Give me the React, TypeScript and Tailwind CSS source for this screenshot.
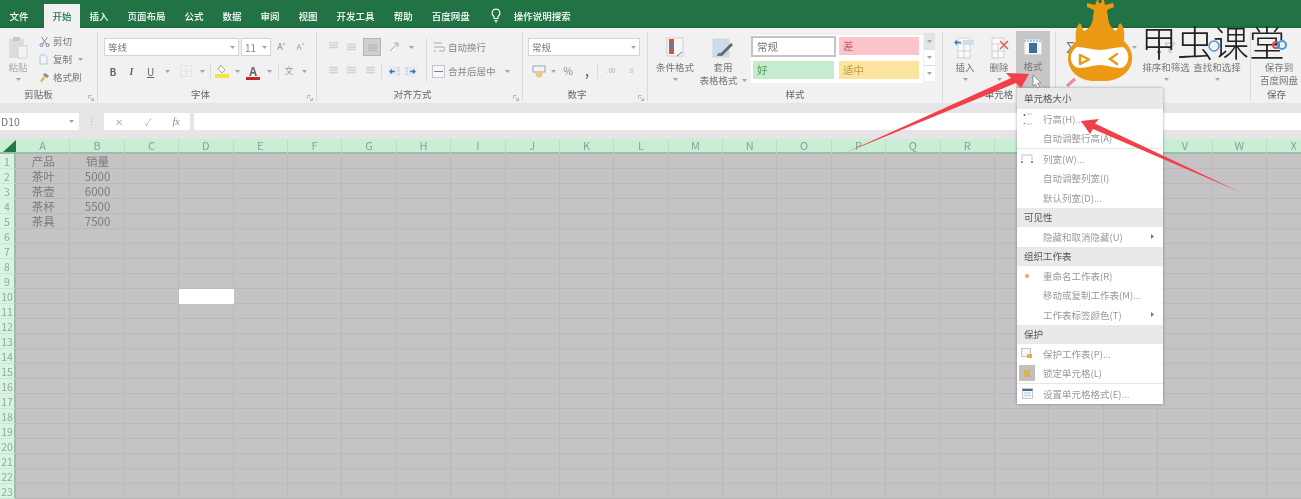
import React from "react";

const Ch = ({ className = "" }: { className?: string }) => (
  <svg width="5" height="3" viewBox="0 0 5 3" className={className}>
    <path d="M0 0h5L2.5 3z" fill="#a5a5a5" />
  </svg>
);

const C = ({ className = "", children }: { className?: string; children?: React.ReactNode }) => (
  <div className={"flex items-center justify-center shrink-0 " + className}>{children}</div>
);

const Group = ({ label, className, labelClass = "", launcher, children }: { label: string; className: string; labelClass?: string; launcher?: boolean; children: React.ReactNode }) => (
  <div className={"relative flex flex-col shrink-0 mt-[4px] h-[69px] border-r border-[#d9d9d9] " + className}>
    <div className="h-[58px]">{children}</div>
    <div className={"h-[13px] leading-[13px] text-center text-[9.5px] text-[#666] " + labelClass}>{label}</div>
    {launcher && (
      <svg width="6" height="6" viewBox="0 0 6 6" className="absolute right-[3px] bottom-0">
        <path d="M.5.5h3M.5.5v3M2 2l3.500 3.500M5.500 3v2.500H3" stroke="#aaa" strokeWidth=".8" fill="none" />
      </svg>
    )}
  </div>
);

const T = ({ className = "", children }: { className?: string; children: React.ReactNode }) => (
  <span className={"text-[9.5px] leading-[12px] text-[#777] whitespace-nowrap " + className}>{children}</span>
);

const AlignIcon = ({ c = "#d2d2d2", y = 0 }: { c?: string; y?: number }) => (
  <svg width="11" height="10" viewBox="0 0 11 10">
    <path d={`M1 ${1.5 + y}h9M1 ${4 + y}h9M1 ${6.5 + y}h9`} stroke={c} strokeWidth="1.500" />
  </svg>
);

const Tab = ({ children, className = "" }: { children: React.ReactNode; className?: string }) => (
  <div className={"px-[9.5px] text-[9.5px] leading-[24px] text-white font-medium whitespace-nowrap " + className}>{children}</div>
);

const TitleBar = () => (
  <div className="flex h-[28px] pt-[4px] bg-[#217346] border-b-2 border-[#1a6b3c] shrink-0">
    <Tab className="mr-[6px]">文件</Tab>
    <div className="w-[36px] h-[24px] bg-[#f1f1f1] text-center text-[9.5px] leading-[24px] text-[#217346] font-medium">开始</div>
    <Tab>插入</Tab>
    <Tab>页面布局</Tab>
    <Tab>公式</Tab>
    <Tab>数据</Tab>
    <Tab>审阅</Tab>
    <Tab>视图</Tab>
    <Tab>开发工具</Tab>
    <Tab>帮助</Tab>
    <Tab>百度网盘</Tab>
    <svg width="10" height="15" viewBox="0 0 10 15" className="ml-[12px] mt-[4px]">
      <path d="M5 1a4 4 0 0 0-2.500 7c.6.6.7 1.500.7 2.500h3.600c0-1 .1-1.900.7-2.500A4 4 0 0 0 5 1z" fill="none" stroke="#fff" strokeWidth="1.200" />
      <path d="M3.500 12.500h3M4 14h2" stroke="#fff" />
    </svg>
    <Tab className="ml-[3px]">操作说明搜索</Tab>
  </div>
);

const Clipboard = () => (
  <Group label="剪贴板" className="w-[98px]" labelClass="pr-[20px]" launcher>
    <div className="flex">
      <div className="w-[36px] flex flex-col items-center pt-[4px]">
        <svg width="22" height="23" viewBox="0 0 22 23">
          <rect x="2" y="3" width="15" height="19" fill="#dcdcdc" />
          <rect x="6" y="1" width="7" height="4" fill="#c6c6c6" />
          <rect x="11" y="10" width="9" height="12" fill="#f4f4f4" stroke="#d2d2d2" />
        </svg>
        <T className="mt-[2px] text-[#aaa]">粘贴</T>
        <Ch className="mt-[5px]" />
      </div>
      <div className="flex flex-col gap-[6px] pt-[3px] pl-[3px]">
        <div className="flex items-center h-[12px]">
          <svg width="11" height="11" viewBox="0 0 11 11" className="mr-[3px]">
            <path d="M2.500 1l5 7M8.500 1l-5 7" stroke="#888" fill="none" />
            <circle cx="2.500" cy="9" r="1.500" fill="none" stroke="#6f89b0" />
            <circle cx="8.500" cy="9" r="1.500" fill="none" stroke="#6f89b0" />
          </svg>
          <T>剪切</T>
        </div>
        <div className="flex items-center h-[12px]">
          <svg width="11" height="11" viewBox="0 0 11 11" className="mr-[3px]">
            <path d="M1 1h5l2 2v7H1z" fill="#eef3f8" stroke="#b8c6d6" />
          </svg>
          <T>复制</T>
          <Ch className="ml-[6px]" />
        </div>
        <div className="flex items-center h-[12px]">
          <svg width="11" height="11" viewBox="0 0 11 11" className="mr-[3px]">
            <path d="M6 1l4 3-2 2-4-3z" fill="#888" />
            <path d="M5 4L1 9l2 1 3-4z" fill="#e8b23a" />
          </svg>
          <T>格式刷</T>
        </div>
      </div>
    </div>
  </Group>
);

const Select = ({ className, value }: { className: string; value: string }) => (
  <div className={"flex items-center justify-between h-[18px] bg-white border border-[#d4d4d4] px-[3px] " + className}>
    <T className="text-[#8a8a8a]">{value}</T>
    <Ch />
  </div>
);

const Sep = ({ className = "" }: { className?: string }) => <div className={"w-px h-[16px] bg-[#dcdcdc] shrink-0 " + className} />;

const FontGroup = () => (
  <Group label="字体" className="w-[219px]" labelClass="pr-[13px]" launcher>
    <div className="flex flex-col gap-[6px] pt-[6px] pl-[6px]">
      <div className="flex h-[18px] items-center">
        <Select className="w-[135px]" value="等线" />
        <div className="flex items-center justify-between w-[30px] h-[18px] ml-[2px] bg-white border border-[#d4d4d4] px-[3px]">
          <span className="text-[10px] text-[#888]">11</span>
          <Ch />
        </div>
        <C className="w-[19px] ml-[1px] text-[9px] text-[#888]">A<sup className="text-[5px]">^</sup></C>
        <C className="w-[19px] text-[8px] text-[#999]">A<sup className="text-[5px]">ˇ</sup></C>
      </div>
      <div className="flex h-[18px] items-center">
        <C className="w-[18px] text-[10px] font-bold text-[#666]">B</C>
        <C className="w-[19px] text-[10px] italic font-bold text-[#666] font-['Liberation_Serif',serif]">I</C>
        <C className="w-[19px] text-[10px] underline text-[#666]">U</C>
        <C className="w-[14px]"><Ch /></C>
        <C className="w-[24px]">
          <svg width="12" height="12" viewBox="0 0 12 12">
            <path d="M.5.500h11v11H.5zM6 .5v11M.5 6h11" stroke="#dcdcdc" fill="none" strokeDasharray="1 .5" />
          </svg>
        </C>
        <C className="w-[8px]"><Ch /></C>
        <Sep className="ml-[4px] mr-[4px]" />
        <C className="w-[14px]">
          <svg width="14" height="14" viewBox="0 0 14 14">
            <path d="M6 1l4 5-3 3-4-4z" fill="#f4f4f4" stroke="#aaa" />
            <rect x="0" y="10" width="14" height="4" fill="#f1e83f" />
          </svg>
        </C>
        <C className="w-[17px]"><Ch /></C>
        <C className="w-[14px] relative">
          <span className="text-[12px] leading-[12px] font-bold text-[#666]">A</span>
          <span className="absolute left-0 right-0 bottom-[-3px] h-[3px] bg-[#c9242b]" />
        </C>
        <C className="w-[18px]"><Ch /></C>
        <Sep />
        <C className="w-[20px] text-[9px] text-[#999]">文</C>
        <C className="w-[10px]"><Ch /></C>
      </div>
    </div>
  </Group>
);

const AlignGroup = () => (
  <Group label="对齐方式" className="w-[206px]" labelClass="pr-[14px]" launcher>
    <div className="flex pt-[6px]">
      <div className="flex flex-col gap-[6px] pl-[7px]">
        <div className="flex h-[18px] items-center">
          <C className="w-[18px]"><AlignIcon y={-1} /></C>
          <C className="w-[18px]"><AlignIcon y={1} /></C>
          <C className="w-[18px] h-[18px] ml-[3px] bg-[#cfcfcf] border border-[#b5b5b5]"><AlignIcon c="#bbb" y={2} /></C>
          <C className="w-[22px] ml-[2px] text-[9px] text-[#999]">
            <svg width="12" height="12" viewBox="0 0 12 12"><path d="M2 10L9 3M6 2h4v4" stroke="#a5a5a5" fill="none" /></svg>
          </C>
          <C className="w-[12px]"><Ch /></C>
        </div>
        <div className="flex h-[18px] items-center">
          <C className="w-[18px]"><AlignIcon /></C>
          <C className="w-[18px]"><AlignIcon /></C>
          <C className="w-[21px]"><AlignIcon /></C>
          <Sep />
          <C className="w-[22px] ml-[1px]">
            <svg width="12" height="11" viewBox="0 0 12 11"><rect width="12" height="11" fill="#e6ecf2" /><path d="M9 2h3M9 5h3M9 8h3" stroke="#ccc" /><path d="M7 5.500H2M4 3.500l-2 2 2 2" stroke="#3e78b8" fill="none" strokeWidth="1.300" /></svg>
          </C>
          <C className="w-[12px]">
            <svg width="12" height="11" viewBox="0 0 12 11"><rect width="12" height="11" fill="#e6ecf2" /><path d="M0 2h3M0 5h3M0 8h3" stroke="#ccc" /><path d="M5 5.500h5M8 3.500l2 2-2 2" stroke="#3e78b8" fill="none" strokeWidth="1.300" /></svg>
          </C>
        </div>
      </div>
      <Sep className="ml-[9px] !h-[44px]" />
      <div className="flex flex-col gap-[6px] pl-[5px]">
        <div className="flex h-[18px] items-center">
          <svg width="13" height="12" viewBox="0 0 13 12" className="mr-[3px]">
            <path d="M2 2h8M2 6h9a2 2 0 0 1 0 4H7M2 10h2" stroke="#a8a8a8" fill="none" />
          </svg>
          <T className="text-[#888]">自动换行</T>
        </div>
        <div className="flex h-[18px] items-center">
          <svg width="13" height="13" viewBox="0 0 13 13" className="mr-[3px]">
            <rect x=".5" y=".5" width="12" height="12" fill="#f7f7f7" stroke="#c6c6c6" />
            <path d="M2 6.500h9" stroke="#5b87b8" />
          </svg>
          <T className="text-[#888]">合并后居中</T>
          <Ch className="ml-[9px]" />
        </div>
      </div>
    </div>
  </Group>
);

const NumberGroup = () => (
  <Group label="数字" className="w-[125px]" labelClass="pr-[16px]" launcher>
    <div className="flex flex-col gap-[6px] pt-[6px] pl-[5px]">
      <div className="flex h-[18px] items-center">
        <Select className="w-[112px]" value="常规" />
      </div>
      <div className="flex h-[18px] items-center">
        <C className="w-[22px]">
          <svg width="14" height="13" viewBox="0 0 14 13">
            <rect x="1" y="1" width="12" height="6" fill="#f4f4f4" stroke="#8ba6c4" />
            <circle cx="7" cy="9" r="3.500" fill="#efc58e" />
          </svg>
        </C>
        <C className="w-[7px]"><Ch /></C>
        <C className="w-[18px] ml-[2px] text-[10.5px] text-[#888]">%</C>
        <C className="w-[20px] text-[11px] font-bold text-[#666]">,</C>
        <Sep className="mr-[3px]" />
        <C className="w-[20px] text-[6px] leading-[6px] text-[#aaa]">.00</C>
        <C className="w-[20px] text-[6px] leading-[6px] text-[#aaa]">.0</C>
      </div>
    </div>
  </Group>
);

const Big = ({ className = "", icon, lines, chev = true }: { className?: string; icon: React.ReactNode; lines: React.ReactNode[]; chev?: boolean }) => (
  <div className={"flex flex-col items-center shrink-0 pt-[3px] " + className}>
    <div className="h-[25px] flex items-center">{icon}</div>
    {lines.map((l, i) => (
      <T key={i} className="mt-[1px] text-[#777]">{l}</T>
    ))}
    {chev && <Ch className="mt-[5px]" />}
  </div>
);

const Style = ({ className, children }: { className: string; children: string }) => (
  <div className={"flex items-center pl-[4px] text-[10.5px] " + className}>{children}</div>
);

const StylesGroup = () => (
  <Group label="样式" className="w-[295px]">
    <div className="flex">
      <Big
        className="w-[50px] ml-[2px]"
        lines={["条件格式"]}
        icon={
          <svg width="20" height="22" viewBox="0 0 20 22">
            <rect x="2" y="1" width="16" height="18" fill="#f6f6f6" stroke="#d0d0d0" />
            <rect x="4" y="2" width="5" height="5" fill="#c65b3b" />
            <rect x="4" y="7" width="5" height="5" fill="#5d7fae" />
            <rect x="4" y="12" width="5" height="5" fill="#c65b3b" />
            <path d="M12 19l5-4" stroke="#777" />
          </svg>
        }
      />
      <Big
        className="w-[46px]"
        lines={[
          "套用",
          <span className="inline-flex items-center" key="b">表格格式<Ch className="ml-[4px]" /></span>,
        ]}
        chev={false}
        icon={
          <svg width="24" height="22" viewBox="0 0 24 22">
            <path d="M2 2h16v18H2z" fill="#cfdbe9" stroke="#d6d6d6" />
            <path d="M8 18l12-12 2 2-11 11z" fill="#666" />
            <path d="M6 19c0-3 3-4 5-3l-1 3z" fill="#4a7fb5" />
          </svg>
        }
      />
      <div className="grid grid-cols-[85px_85px] grid-rows-[24px_24px] w-[172px] h-[48px] mt-[3px] ml-[5px] bg-white content-start">
        <Style className="border-2 border-[#c4c4c4] bg-white text-[#777] h-[21px] mt-[1px]">常规</Style>
        <Style className="bg-[#fcc5cc] text-[#c5636e] ml-[3px] h-[18px] mt-[2px] w-[80px]">差</Style>
        <Style className="bg-[#c7ebcf] text-[#4d9a5e] ml-[2px] h-[18px] mt-[2px] w-[81px]">好</Style>
        <Style className="bg-[#fde49e] text-[#c39a45] ml-[3px] h-[18px] mt-[2px] w-[80px]">适中</Style>
      </div>
      <div className="flex flex-col w-[11px] mt-[1px] ml-[1px]">
        <C className="h-[17px] bg-[#e4e4e4]"><Ch /></C>
        <C className="h-[15px] bg-white"><Ch /></C>
        <C className="h-[16px] bg-white border-t border-[#ddd]"><Ch /></C>
      </div>
    </div>
  </Group>
);

const TableIcon = ({ del }: { del?: boolean }) => (
  <svg width="26" height="22" viewBox="0 0 26 22">
    <path d="M6 1h12v20H6zM6 7h12M6 14h12M12 7v14" stroke="#d0d0d0" fill="#fafafa" />
    {del ? (
      <path d="M14 4l8 8M22 4l-8 8" stroke="#d9604c" strokeWidth="1.500" />
    ) : (
      <>
        <rect x="11" y="3" width="11" height="5" fill="#cfdcea" />
        <path d="M9 5.500H3M5 3.500l-2 2 2 2" stroke="#3e78b8" fill="none" strokeWidth="1.300" />
      </>
    )}
  </svg>
);

const CellsGroup = () => (
  <Group label="单元格" className="w-[113px]">
    <div className="flex pl-[5px]">
      <Big className="w-[34px]" lines={["插入"]} icon={<TableIcon />} />
      <Big className="w-[34px]" lines={["删除"]} icon={<TableIcon del />} />
      <div className="w-[34px] h-[57px] bg-[#c6c6c6] -mt-[1px]">
        <Big
          lines={["格式"]}
          icon={
            <svg width="20" height="20" viewBox="0 0 20 20">
              <rect x="1" y="2" width="18" height="16" fill="#f6f6f6" stroke="#b8c4d2" />
              <rect x="6" y="6" width="8" height="10" fill="#3f6f9f" />
              <path d="M1 4h18" stroke="#6f8fb0" strokeDasharray="2 1" />
            </svg>
          }
        />
      </div>
    </div>
  </Group>
);

const EditGroup = () => (
  <Group label="" className="w-[195px]">
    <div className="flex">
      <div className="w-[84px] flex flex-col pl-[10px] pt-[6px]">
        <div className="flex items-center h-[18px]">
          <span className="text-[15px] leading-[18px] text-[#777]">Σ</span>
          <Ch className="ml-[57px]" />
        </div>
        <svg width="16" height="10" viewBox="0 0 16 10" className="mt-[21px]">
          <path d="M1 9l8-7" stroke="#e58aa6" strokeWidth="3" />
        </svg>
      </div>
      <Big
        className="w-[52px]"
        lines={["排序和筛选"]}
        icon={
          <svg width="22" height="16" viewBox="0 0 22 16">
            <path d="M4 1v13M2 11l2 3 2-3" stroke="#7b6a9c" fill="none" />
            <path d="M10 3h10l-4 5v5l-2-1V8z" stroke="#bdbdbd" fill="none" />
          </svg>
        }
      />
      <Big className="w-[50px]" lines={["查找和选择"]} icon={<span />} />
    </div>
  </Group>
);

const SaveGroup = () => (
  <Group label="保存" className="w-[51px] border-r-0">
    <Big lines={["保存到", "百度网盘"]} chev={false} icon={<span />} className="pl-[5px]" />
  </Group>
);

const Ribbon = () => (
  <div className="flex h-[75px] bg-[#f1f1f1] shrink-0">
    <Clipboard />
    <FontGroup />
    <AlignGroup />
    <NumberGroup />
    <StylesGroup />
    <CellsGroup />
    <EditGroup />
    <SaveGroup />
  </div>
);

const FormulaBar = () => (
  <div className="flex h-[36px] py-[10px] pb-[9px] bg-[#e6e4e6] shrink-0">
    <div className="flex items-center justify-between w-[79px] h-[17px] bg-white pl-[1px] pr-[5px]">
      <span className="text-[10.5px] text-[#777]">D10</span>
      <Ch />
    </div>
    <C className="w-[25px] h-[17px] text-[9px] text-[#aaa]">⋮</C>
    <div className="flex items-center w-[86px] h-[17px] bg-white">
      <C className="w-[30px] text-[10px] text-[#b5b5b5]">✕</C>
      <C className="w-[28px] text-[10px] text-[#b5b5b5]">✓</C>
      <C className="w-[28px] text-[10px] italic text-[#888] font-['Liberation_Serif',serif]">fx</C>
    </div>
    <div className="flex-1 h-[17px] ml-[4px] bg-white" />
  </div>
);

const COLS = "ABCDEFGHIJKLMNOPQRSTUVWX".split("");
const ROWS = Array.from({ length: 23 }, (_, i) => i + 1);
const DATA: Record<string, string> = {
  A1: "产品", B1: "销量",
  A2: "茶叶", B2: "5000",
  A3: "茶壶", B3: "6000",
  A4: "茶杯", B4: "5500",
  A5: "茶具", B5: "7500",
};

const Sheet = () => (
  <div className="grid grid-cols-[16px_repeat(24,54.4px)] grid-rows-[15px_repeat(23,15px)]">
    <div className="relative bg-[#c9eed6] border-b-2 border-[#9bbfa6]">
      <svg width="13" height="12" viewBox="0 0 13 12" className="absolute right-0 bottom-0">
        <path d="M13 0v12H0z" fill="#1f7a46" />
      </svg>
    </div>
    {COLS.map((c) => (
      <div key={c} className="flex items-center justify-center bg-[#c9eed6] border-b-2 border-r border-[#bbe0c9] border-b-[#9bbfa6] text-[11px] leading-none text-[#8ca094]">
        {c}
      </div>
    ))}
    {ROWS.map((r) => (
      <React.Fragment key={r}>
        <div className="flex items-center justify-center pt-[2px] bg-[#d7f3e1] border-r-2 border-b border-[#c9e8d4] border-r-[#9bbfa6] text-[10.5px] leading-none text-[#93a79b]">
          {r}
        </div>
        {COLS.map((c) => {
          const k = c + r;
          const active = k === "D10";
          return (
            <div
              key={k}
              className={
                "flex items-center justify-center pt-[2px] pl-[1px] text-[11.5px] leading-none text-[#7c7a7d] " +
                (active ? "bg-white" : "bg-[#c6c3c7] border-r border-b border-[#bcb9bd]")
              }
            >
              {DATA[k]}
            </div>
          );
        })}
      </React.Fragment>
    ))}
  </div>
);

const MenuHead = ({ children, className = "h-[19.500px]" }: { children: string; className?: string }) => (
  <div className={"flex items-center pl-[7px] bg-[#e9e9e9] text-[9.5px] text-[#555] " + className}>{children}</div>
);

const MenuItem = ({ children, icon, arrow, line, hi }: { children: string; icon?: React.ReactNode; arrow?: boolean; line?: boolean; hi?: boolean }) => (
  <div className={"relative flex items-center bg-white " + (line ? "h-[20.500px] border-b border-[#e6e6e6]" : "h-[19.500px]")}>
    <C className={"w-[16px] h-[16px] ml-[2px] mr-[8px] " + (hi ? "bg-[#c4bfbb]" : "")}>{icon}</C>
    <span className="text-[9.5px] text-[#999] whitespace-nowrap">{children}</span>
    {arrow && (
      <svg width="3" height="5" viewBox="0 0 3 5" className="absolute right-[9px] top-[7px]">
        <path d="M0 0l3 2.500L0 5z" fill="#777" />
      </svg>
    )}
  </div>
);

const Menu = () => (
  <div className="absolute left-[1017px] top-[88px] w-[146px] flex flex-col bg-white shadow-[0_0_3px_rgba(0,0,0,0.35)]">
    <MenuHead className="h-[21px]">单元格大小</MenuHead>
    <MenuItem
      icon={
        <svg width="9" height="12" viewBox="0 0 9 12">
          <path d="M4 1h5M4 11h5" stroke="#c2c2c2" />
          <path d="M1.500 1v10" stroke="#5d6f88" strokeWidth="1.600" strokeDasharray="2 7" />
        </svg>
      }
    >
      行高(H)...
    </MenuItem>
    <MenuItem line>自动调整行高(A)</MenuItem>
    <MenuItem
      icon={
        <svg width="12" height="9" viewBox="0 0 12 9">
          <path d="M1 6V1h10v5" stroke="#c2c2c2" fill="none" />
          <path d="M0 8h12" stroke="#5d6f88" strokeWidth="1.400" strokeDasharray="2 8" />
        </svg>
      }
    >
      列宽(W)...
    </MenuItem>
    <MenuItem>自动调整列宽(I)</MenuItem>
    <MenuItem>默认列宽(D)...</MenuItem>
    <MenuHead>可见性</MenuHead>
    <MenuItem arrow>隐藏和取消隐藏(U)</MenuItem>
    <MenuHead>组织工作表</MenuHead>
    <MenuItem icon={<span className="w-[4px] h-[4px] rounded-full bg-[#e3b23c]" />}>重命名工作表(R)</MenuItem>
    <MenuItem>移动或复制工作表(M)...</MenuItem>
    <MenuItem arrow>工作表标签颜色(T)</MenuItem>
    <MenuHead>保护</MenuHead>
    <MenuItem
      icon={
        <svg width="12" height="11" viewBox="0 0 12 11">
          <rect x=".5" y=".5" width="9" height="8" fill="#f5f5f5" stroke="#b8c4d2" />
          <rect x="6" y="6" width="5" height="4" fill="#e3b23c" />
        </svg>
      }
    >
      保护工作表(P)...
    </MenuItem>
    <MenuItem hi line icon={<span className="w-[6px] h-[7px] bg-[#d9b158]" />}>锁定单元格(L)</MenuItem>
    <MenuItem
      icon={
        <svg width="11" height="11" viewBox="0 0 11 11">
          <rect x=".5" y=".5" width="10" height="10" fill="#f7f7f7" stroke="#c2c8d0" />
          <path d="M.5 2h10" stroke="#3f6f9f" strokeWidth="2" />
          <path d="M2 5h7M2 7.500h7" stroke="#c7c7c7" />
        </svg>
      }
    >
      设置单元格格式(E)...
    </MenuItem>
  </div>
);

const Logo = () => (
  <>
    <svg width="90" height="90" viewBox="0 0 90 90" className="absolute left-[1060px] top-0">
      <path
        fill="#ec9a13"
        d="M27 3 L35 5 L37 0 L44 0 L45 5 L53 3 L54 7 L47 10 L48 18 C49 25 52 29 56 31 C58 29 58 25 60 23 C64 26 65 34 64 41 C69 46 73 52 72 60 C71 71 61 80 46 81 L32 81 C18 80 9 71 8 60 C8 52 11 46 16 41 C15 34 16 26 20 23 C22 25 22 29 24 31 C29 29 32 25 33 18 L34 10 L27 7 Z"
      />
      <circle cx="40" cy="1.500" r="1.800" fill="#217346" />
      <path
        fill="#fff"
        d="M17 47 C25 47 32 50 40 50 C48 50 55 47 63 47 C68 50 69 56 68 60 C67 65 63 68 60 68 C53 68 47 65 40 65 C33 65 27 68 20 68 C16 68 12 65 11 60 C10 56 12 50 17 47 Z"
      />
      <path d="M20 55 L29 59.500 L20 64 Z" fill="none" stroke="#ec9a13" strokeWidth="2.500" strokeLinejoin="round" />
      <path d="M57 54 L50 59 L57 64" fill="none" stroke="#ec9a13" strokeWidth="2.500" strokeLinecap="round" />
    </svg>
    <div className="absolute left-[1141px] top-[22px] text-[36px] leading-[38px] font-light text-[#222] whitespace-nowrap">甲虫课堂</div>
    <svg width="30" height="20" viewBox="0 0 30 20" className="absolute left-[1205px] top-[38px]">
      <circle cx="9" cy="8" r="5" fill="none" stroke="#5b93d6" strokeWidth="1.500" />
    </svg>
    <svg width="20" height="18" viewBox="0 0 20 18" className="absolute left-[1270px] top-[36px]">
      <circle cx="6" cy="9" r="3" fill="none" stroke="#d8475a" strokeWidth="2" />
      <circle cx="12" cy="9" r="4" fill="none" stroke="#3f9bd9" strokeWidth="2" />
    </svg>
  </>
);

const Overlay = () => (
  <svg width="1301" height="499" viewBox="0 0 1301 499" className="absolute left-0 top-0 pointer-events-none">
    <polygon points="845,153 1011,78 1006,73 1029,74 1021,88 1016,83" fill="#f2404a" />
    <polygon points="1240,192 1095,123.500 1099,119 1081,121 1090,134 1093,129" fill="#f2404a" />
    <path d="M1033 75 v11 l2.500-2 2 4 2-1 -2-4 h3.500 z" fill="#fff" stroke="#777" strokeWidth=".7" />
  </svg>
);

export default function App() {
  return (
    <div className="relative w-[1301px] h-[499px] overflow-hidden flex flex-col bg-[#c6c3c7] font-['Noto_Sans_CJK_SC','Noto_Sans',sans-serif] blur-[0.5px]">
      <TitleBar />
      <Ribbon />
      <FormulaBar />
      <Sheet />
      <Menu />
      <Logo />
      <Overlay />
    </div>
  );
}
